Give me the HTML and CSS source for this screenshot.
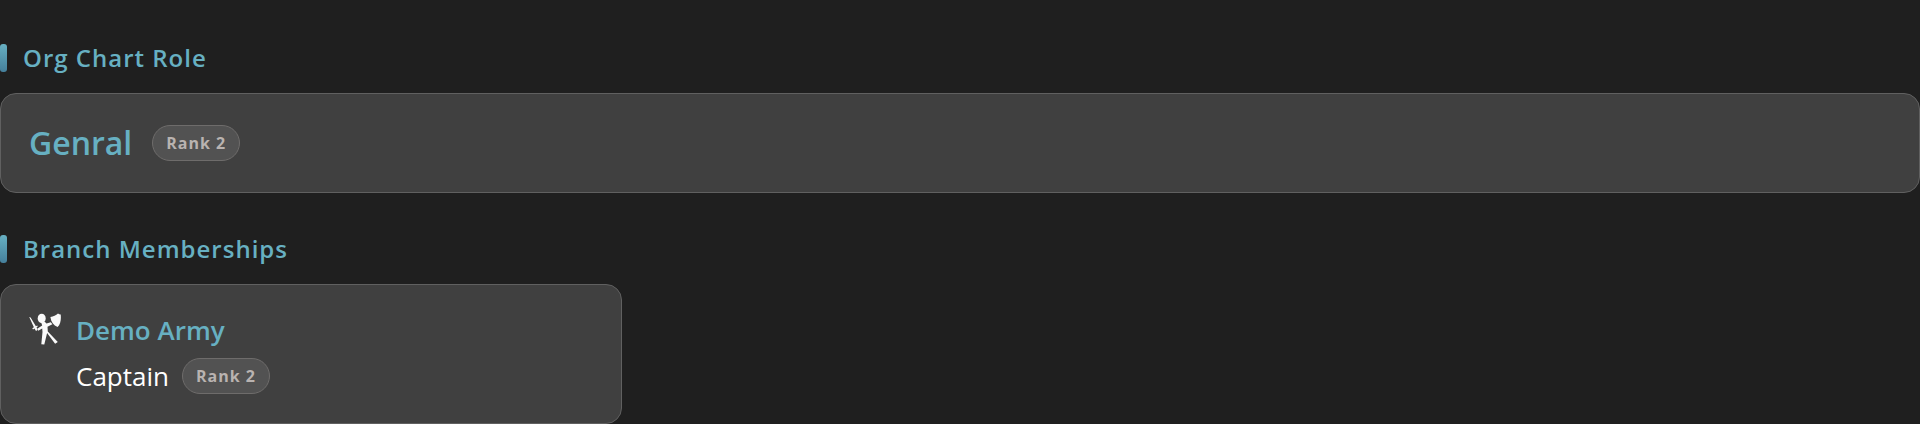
FILE: index.html
```html
<!DOCTYPE html>
<html lang="en">
<head>
    <meta charset="UTF-8">
    <meta name="viewport" content="width=device-width, initial-scale=1.0">
    <title>Member Roles</title>
    <link rel="stylesheet" href="styles.css">
</head>
<body>
    <main class="profile">
        <section class="section">
            <h2 class="section-title">Org Chart Role</h2>
            <div class="card role-card">
                <span class="role-name">Genral</span>
                <span class="rank-badge">Rank 2</span>
            </div>
        </section>
        <section class="section">
            <h2 class="section-title">Branch Memberships</h2>
            <div class="branch-grid">
                <article class="card branch-card">
                    <svg class="branch-icon" viewBox="0 0 32 32" aria-hidden="true">
                        <ellipse cx="12.7" cy="5.400" rx="4" ry="4.700"/>
                        <path d="M12 9h4l1.500 1.500 4.300-1.200 1.600 2-4.900 2.500.3 4.700L28.800 29l-2.700 1.700-8-10.700-2.800 11.500-3-.2L13.500 19l-.3-3.500-4 2.200-1-1.900 5-3.300z"/>
                        <path d="M21.400 3.900C24.500 3.600 27 2.500 29 .6c.7.600 1.700.8 2.700.8.600 5-.2 9.700-3.100 12.700-4.100-1.800-6.600-5.300-7.200-10.200z"/>
                        <path d="M.2 4.100l1.400.5 5.300 8.700 1.300-.9.600 1-1.200.9.900 2.800-1.500.8-1.500-2.400-1.500.9-.7-1.200 1.600-1z"/>
                    </svg>
                    <div class="branch-info">
                        <h3 class="branch-name">Demo Army</h3>
                        <div class="branch-role">
                            <span>Captain</span>
                            <span class="rank-badge">Rank 2</span>
                        </div>
                    </div>
                </article>
            </div>
        </section>
    </main>
</body>
</html>
```

FILE: styles.css
```css
* {
    box-sizing: border-box;
}
body {
    margin: 0;
    background-color: #1f1f1f;
    color: #fff;
    font-family: "Segoe UI", "Open Sans", "Noto Sans", sans-serif;
}
.profile {
    display: flex;
    flex-direction: column;
    gap: 38px;
    padding-top: 40px;
}
.section-title {
    display: flex;
    align-items: center;
    gap: 16px;
    margin: 0 0 17px;
    color: #67b0c2;
    font-size: 24px;
    font-weight: 600;
    line-height: 36px;
    letter-spacing: 1px;
}
.section-title::before {
    content: "";
    width: 7px;
    height: 28px;
    border-radius: 3px;
    background: linear-gradient(#67b0c2, #457f9b);
}
.card {
    display: flex;
    padding: 28px;
    border: 1px solid #606060;
    border-radius: 16px;
    background-color: #404040;
}
.role-card {
    align-items: center;
    gap: 20px;
}
.role-name {
    color: #67b0c2;
    font-size: 32px;
    font-weight: 600;
    line-height: 42px;
}
.rank-badge {
    padding: 0 13px;
    border: 1px solid #6e6c6b;
    border-radius: 18px;
    background-color: #525252;
    color: #b9b3b0;
    font-size: 16px;
    font-weight: 700;
    line-height: 34px;
    letter-spacing: 1px;
}
.branch-grid {
    display: grid;
    grid-template-columns: repeat(auto-fill, minmax(500px, 1fr));
    gap: 27px;
}
.branch-card {
    gap: 15px;
}
.branch-icon {
    flex: none;
    width: 32px;
    height: 32px;
    fill: #fafafa;
}
.branch-info {
    display: flex;
    flex-direction: column;
    gap: 10px;
}
.branch-name {
    margin: 0;
    color: #67b0c2;
    font-size: 26px;
    font-weight: 600;
    line-height: 34px;
}
.branch-role {
    display: flex;
    align-items: center;
    gap: 13px;
    font-size: 26px;
    line-height: 38px;
}
```
